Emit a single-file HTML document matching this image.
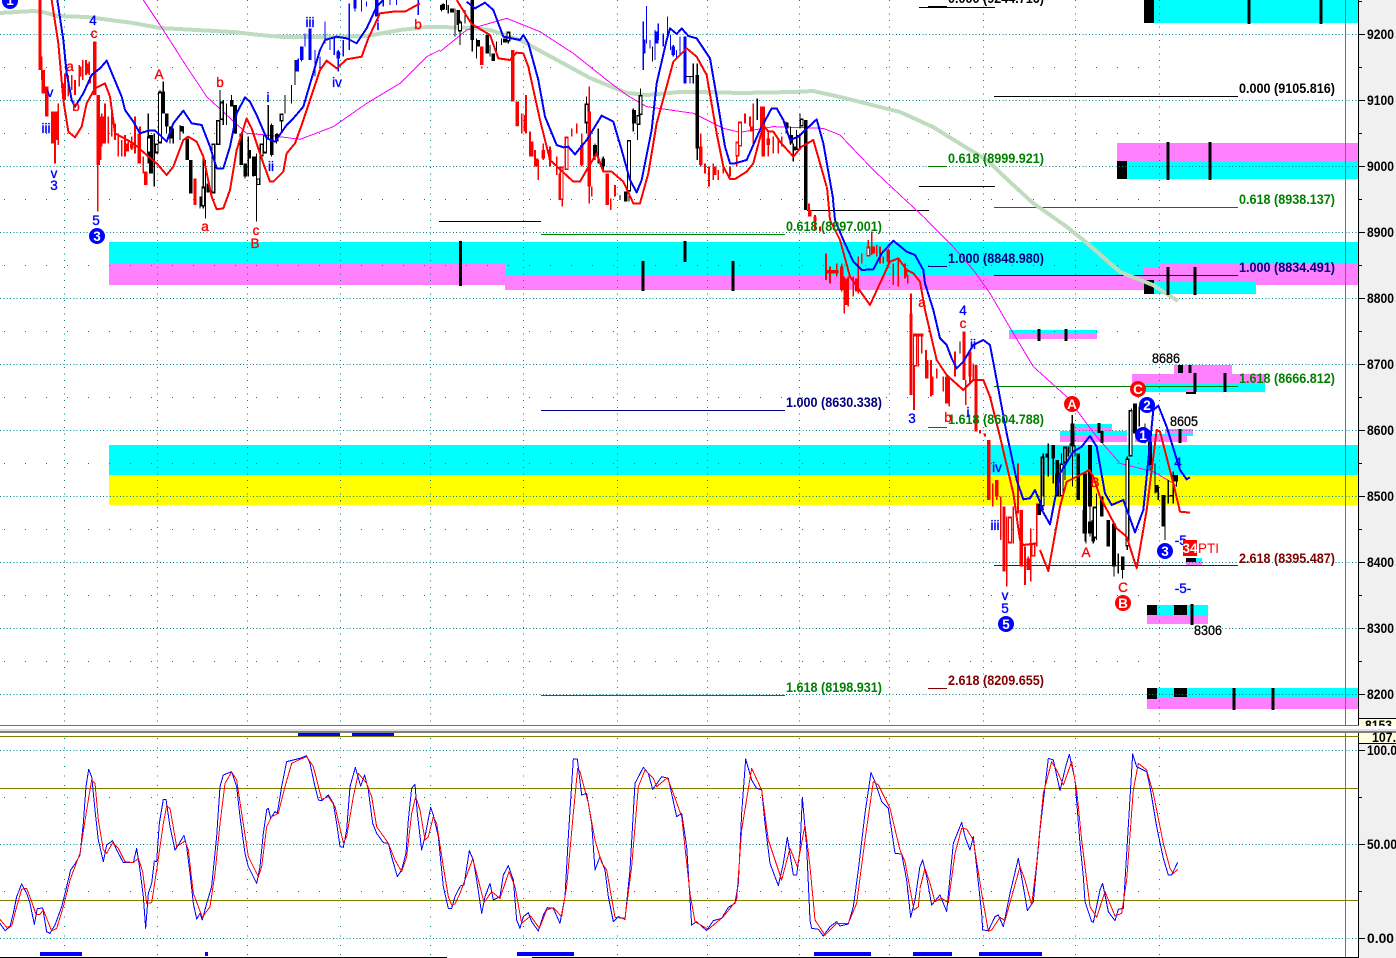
<!DOCTYPE html>
<html><head><meta charset="utf-8"><title>Chart</title>
<style>
html,body{margin:0;padding:0;background:#fff;overflow:hidden}
svg{display:block}
text{font-family:"Liberation Sans",sans-serif}
.f{font-size:13.5px;font-weight:bold}
.w{font-size:13.5px;text-anchor:middle}
</style></head><body>
<svg width="1396" height="958" viewBox="0 0 1396 958" xmlns="http://www.w3.org/2000/svg" shape-rendering="crispEdges">
<rect width="1396" height="958" fill="#fff"/>
<!-- bands -->
<g>
<rect x="1144" y="0" width="215" height="23" fill="#0ff"/><rect x="1144" y="0" width="10" height="23" fill="#000"/>
<rect x="1117" y="143" width="242" height="18" fill="#ff80ff"/><rect x="1127" y="161" width="232" height="18" fill="#0ff"/><rect x="1117" y="161" width="10" height="18" fill="#000"/>
<rect x="109" y="242" width="1250" height="21" fill="#0ff"/><rect x="505" y="263" width="855" height="13" fill="#0ff"/>
<rect x="109" y="263" width="396" height="22" fill="#ff80ff"/><rect x="505" y="276" width="639" height="14" fill="#ff80ff"/>
<rect x="1144" y="267" width="16" height="14" fill="#ff80ff"/><rect x="1160" y="263" width="199" height="22" fill="#ff80ff"/>
<rect x="1144" y="281" width="112" height="13" fill="#0ff"/><rect x="1144" y="280" width="10" height="14" fill="#000"/>
<rect x="109" y="445" width="1250" height="30" fill="#0ff"/><rect x="109" y="475" width="1250" height="30" fill="#ff0"/>
<rect x="1009" y="330" width="88" height="4" fill="#0ff"/><rect x="1009" y="334" width="88" height="5" fill="#ff80ff"/>
<rect x="1174" y="365" width="58" height="9" fill="#ff80ff"/><rect x="1132" y="374" width="133" height="9" fill="#ff80ff"/><rect x="1132" y="383" width="133" height="9" fill="#0ff"/>
<rect x="1186" y="392" width="10" height="2" fill="#000"/><rect x="1186" y="390" width="10" height="2" fill="#ff80ff"/>
<rect x="1178" y="365" width="5" height="8" fill="#000"/>
<rect x="1075" y="424" width="37" height="4" fill="#0ff"/><rect x="1075" y="428" width="37" height="3" fill="#ff80ff"/>
<rect x="1060" y="431" width="67" height="5" fill="#0ff"/><rect x="1060" y="436" width="67" height="6" fill="#ff80ff"/>
<rect x="1165" y="429" width="28" height="5" fill="#ff80ff"/><rect x="1135" y="434" width="58" height="2" fill="#0ff"/><rect x="1135" y="436" width="52" height="6" fill="#ff80ff"/>
<rect x="1186" y="558" width="10" height="4" fill="#000"/><rect x="1196" y="558" width="6" height="4" fill="#0ff"/><rect x="1186" y="562" width="16" height="3" fill="#ff80ff"/>
<rect x="1147" y="605" width="61" height="10" fill="#0ff"/><rect x="1147" y="605" width="10" height="10" fill="#000"/><rect x="1174" y="605" width="13" height="10" fill="#000"/><rect x="1147" y="615" width="61" height="9" fill="#ff80ff"/>
<rect x="1157" y="688" width="202" height="10" fill="#0ff"/><rect x="1147" y="698" width="212" height="11" fill="#ff80ff"/><rect x="1147" y="688" width="10" height="11" fill="#000"/><rect x="1174" y="688" width="13" height="9" fill="#000"/>
</g>
<!-- grid -->
<path fill="none" stroke="#008080" stroke-dasharray="1 2.33" d="M0 34.5H1359M0 100.5H1359M0 166.5H1359M0 232.5H1359M0 298.5H1359M0 364.5H1359M0 430.5H1359M0 496.5H1359M0 562.5H1359M0 628.5H1359M0 694.5H1359M0 750.5H1359M0 844.5H1359M0 938.5H1359"/>
<path fill="none" stroke="#008080" stroke-dasharray="1 20" d="M4 67.5H1150M4 133.5H1150M4 199.5H1150M4 265.5H1150M4 331.5H1150M4 397.5H1150M4 463.5H1150M4 529.5H1150M4 595.5H1150M4 661.5H1150M4 797.5H1150M4 891.5H1150"/>
<path fill="none" stroke="#008080" stroke-dasharray="1 5.67" d="M64.5 0V724M157.5 0V724M247.5 0V724M340.5 0V724M430.5 0V724M523.5 0V724M617.5 0V724M707.5 0V724M799.5 0V724M889.5 0V724M983.5 0V724M1075.5 0V724M1159.5 0V724"/>
<path fill="none" stroke="#008080" stroke-dasharray="1 8.4" d="M64.5 738V958M157.5 738V958M247.5 738V958M340.5 738V958M430.5 738V958M523.5 738V958M617.5 738V958M707.5 738V958M799.5 738V958M889.5 738V958M983.5 738V958M1075.5 738V958M1159.5 738V958"/>
<!-- fib lines -->
<g fill="none">
<path stroke="#000" d="M919 7.5H995M928 6.5H947M919 186.5H995M807 210.5H929M439 221.5H541M994 96.5H1238"/>
<path stroke="#008000" d="M928 166.5H947M541 234.5H785M994 207.5H1238M994 386.5H1238M928 427.5H947M541 695.5H785"/>
<path stroke="#000080" d="M928 266.5H947M994 275.5H1238M541 410.5H785"/>
<path stroke="#800000" d="M994 565.5H1238M928 688.5H947"/>
</g>
<!-- slow MA -->
<path fill="none" stroke="#c0dcc0" stroke-width="4" stroke-linejoin="round" d="M0 13L33 11L43 12L57 16L87 17L133 23L160 28L233 32L260 35L283 37L333 37L367 36L400 30L427 27L440 27L473 28L490 30L520 40L557 60L590 78L627 93L647 95L680 92L707 92L740 93L793 92L813 91L840 97L900 112L933 127L967 148L987 160L1010 182L1033 203L1067 227L1087 243L1120 272L1153 285L1178 301"/>
<!-- magenta -->
<g fill="none" stroke="#f0f" stroke-width="3" transform="scale(.33333)"><path d="M430 0L480 75L560 200L620 290L680 345L740 400L800 405L900 418L1000 380L1100 310L1200 250L1280 170L1320 150"/></g>
<g fill="none" stroke="#f0f" stroke-width="3" transform="translate(440,0) scale(.33333)"><path d="M0 155L80 90L200 55L300 95L400 160L500 240L560 285L620 320L760 340L850 385L900 397L1000 380L1150 385L1200 405L1300 510L1380 585"/></g>
<path fill="none" stroke="#f0f" d="M900 195L927 220"/>
<g fill="none" stroke="#f0f" stroke-width="3" transform="translate(800,220) scale(.33333)"><path d="M380 0L450 70L520 150L570 220L640 340L700 440L800 530"/></g>
<g fill="none" stroke="#f0f" stroke-width="3" transform="translate(1040,340) scale(.33333)"><path d="M80 170L170 290L240 370L280 380L340 395L400 430L410 440"/></g>
<!-- bars z1 -->
<g transform="scale(.33333)" fill="none">
<path stroke="#f00" stroke-width="5" d="M165 350V490M175 310V435M293 495V635M125 170V240M195 220V300M205 225V290M215 225V270M225 240V285M238 195V260M248 180V240M258 180V225M268 185V225M305 340V440M315 310V430M325 350V430M335 340V410M345 370V420M355 400V470M365 420V470M375 405V470M385 420V455M395 410V450M405 350V460M415 400V490M420 380V490M430 470V520M190 250V300M300 350V430M310 350V430M270 230V250"/>
<path stroke="#f00" stroke-width="10" d="M120 0V210M130 210V280M140 260V350M158 335V430M284 125V285M295 285V495M437 515V555M585 535V615M300 350V480M240 200V230M262 190V220M380 430V455M395 430V445M168 335V420M310 350V430"/>
<path stroke="#000" stroke-width="3.5" d="M445 340V490M463 400V560M480 270V430M490 245V340M500 340V400M510 380V430M520 385V430M540 375V420M550 380V400M560 410V480M610 470V625M617 480V655M600 590V625M650 360V435M660 270V360M670 300V375M680 310V375M695 285V320M705 315V400M720 400V495M735 490V535M745 410V530M750 450V475M760 470V530M770 460V665M780 430V540M795 405V460M805 315V420M815 370V470M830 400V430M845 340V400M855 285V340M875 255V310M885 180V255M1365 25V110M1330 10V30M1345 15V40"/>
<path stroke="#000" stroke-width="11" d="M453 405V520M490 275V340M500 340V380M513 380V415M545 378V395M562 415V480M572 480V580M605 590V620M625 550V577M705 315V400M724 400V495M736 490V530M748 450V475M762 470V528M815 375V465M830 402V425M1330 12V28M1355 25V38M1375 30V75M695 300V320"/>
<path stroke="#000" stroke-width="12" d="M640 430V580M655 360V435M665 305V360M775 535V555M785 430V470M795 405V460M845 340V365M480 275V430M470 430V460M447 410V460M610 560V620"/>
<path stroke="#fff" stroke-width="5" d="M640 435V575M655 365V430M665 310V355M775 538V552M785 435V465M795 410V455M845 345V360M480 280V425M470 435V455M447 415V455M610 565V615"/>
<path stroke="#00f" stroke-width="3.5" d="M945 150V230M960 170V210M975 65V130M990 120V150M1003 110V165M1015 150V215M1030 120V170M1048 10V150M1065 0V35M1085 0V35M1100 5V20M1255 0V45M905 140V185M915 100V140M895 175V215M1150 0V20M1170 0V15M1190 0V15"/>
<path stroke="#00f" stroke-width="10" d="M930 85V180M1130 0V50M1065 0V25M1015 155V175M890 180V215M905 140V180"/>
</g>
<!-- bars z2 -->
<g transform="translate(440,0) scale(.33333)" fill="none">
<path stroke="#000" stroke-width="3.5" d="M5 15V35M20 0V30M45 30V110M60 60V135M75 30V70M97 0V155M110 115V175M150 135V170M170 125V160M185 115V135M205 95V130M440 290V400M465 430V480M475 385V490M490 470V510M540 585V600M567 420V605M580 325V395M593 345V420M602 265V345M638 140V185M750 230V250M760 190V250M772 190V480M952 295V360M1038 365V400M1052 380V435M1060 430V485M1070 390V450M1080 340V385"/>
<path stroke="#000" stroke-width="11" d="M5 15V30M37 25V38M97 0V120M115 120V140M142 105V160M160 160V183M195 115V128M465 435V470M490 475V500M557 575V605M582 330V370M772 225V445M1040 368V385M1054 405V430M1063 440V452M1097 360V630"/>
<path stroke="#000" stroke-width="12" d="M60 65V95M205 95V125M440 310V370M567 420V575M595 345V375M602 285V345M1075 405V450M1085 355V380"/>
<path stroke="#fff" stroke-width="5" d="M60 70V90M205 100V120M440 315V365M567 425V570M595 350V370M602 290V340M1075 410V445M1085 360V375"/>
<path stroke="#f00" stroke-width="5" d="M125 200V205M232 305V380M245 340V400M258 285V400M270 395V470M285 450V500M295 480V540M310 430V480M330 440V500M350 470V525M367 500V620M380 410V510M395 385V410M410 370V400M425 400V500M448 260V610M455 560V590M512 595V630M525 555V590M782 400V500M795 490V520M807 500V560M820 490V540M835 510V540M850 495V520M870 500V530M890 425V500M900 365V440M915 340V370M930 350V380M940 310V440M962 320V390M985 390V470M1000 410V460M1015 420V460M1025 410V440M1107 610V650M1125 645V690M1140 680V695"/>
<path stroke="#f00" stroke-width="10" d="M125 140V195M218 150V305M232 305V378M255 345V395M275 425V470M290 475V500M360 520V600M425 435V495M448 335V560M502 520V615M970 320V470M782 440V495M825 500V525M935 380V395M985 415V435M1110 630V650M1125 650V665M310 450V475M330 450V480"/>
<path stroke="#f00" stroke-width="12" d="M365 500V600M380 410V510M892 425V470M900 365V440"/>
<path stroke="#fff" stroke-width="5" d="M365 505V595M380 415V505M892 430V465M900 370V435"/>
<path stroke="#00f" stroke-width="3.5" d="M610 65V210M620 18V130M630 120V145M645 90V180M655 70V120M670 100V140M683 50V110M692 105V150M700 135V170M710 150V175M720 110V165M750 230V250"/>
<path stroke="#00f" stroke-width="10" d="M735 110V250M700 140V165M612 118V160M650 95V130"/>
<path stroke="#000" stroke-width="3" d="M735 230H760"/>
</g>
<!-- bars z3 -->
<g transform="translate(800,220) scale(.33333)" fill="none">
<path stroke="#f00" stroke-width="5" d="M78 100V180M90 140V190M110 130V170M125 130V215M133 170V280M145 170V260M160 170V230M175 110V220M185 100V130M205 60V110M215 35V105M230 75V110M240 80V130M250 110V130M265 85V130M280 130V195M295 120V200M315 130V175M323 165V190M342 340V570M355 340V440M365 345V400M378 390V475M393 420V530M410 445V475M430 470V515M448 470V560M465 395V470M497 480V555M510 395V490M520 430V480M540 630V640M555 640V650M578 790V860M590 780V840M602 830V960M620 890V1100M640 860V970M654 730V880M675 980V1095M685 1010V1050M692 925V1085M700 970V1010M710 850V980M333 220V525"/>
<path stroke="#f00" stroke-width="10" d="M125 140V210M140 175V255M170 175V215M220 80V100M265 90V125M318 145V170M333 280V525M380 420V475M395 470V525M440 470V550M492 335V480M510 395V470M528 435V635M566 660V840M590 780V830M612 860V1055M664 870V1040M685 1015V1050M75 155H115M345 345H370"/>
<path stroke="#f00" stroke-width="12" d="M345 345V440M630 890V970M700 970V1010M205 80V110"/>
<path stroke="#fff" stroke-width="5" d="M345 350V435M630 895V965M700 975V1005M205 85V105"/>
<path stroke="#000" stroke-width="3.5" d="M480 365V400M728 710V860M745 670V770M785 700V790M795 680V730M805 680V710M818 590V800M858 870V970M882 900V965M890 860V950M870 675V950"/>
<path stroke="#000" stroke-width="11" d="M718 850V885M760 675V715M772 720V830M835 700V840M818 610V680M853 870V940M870 905V940M880 900V955"/>
<path stroke="#000" stroke-width="12" d="M728 710V860M795 680V730"/>
<path stroke="#fff" stroke-width="5" d="M728 715V855M795 685V725"/>
</g>
<!-- bars z4 -->
<g transform="translate(1040,340) scale(.33333)" fill="none">
<path stroke="#000" stroke-width="3.5" d="M10 340V470M25 340V365M40 315V430M60 370V470M75 320V420M90 310V340M97 225V320M105 315V350M135 400V605M160 500V610M170 460V600M222 550V710M235 640V700M248 650V715M262 350V630M275 205V350M298 200V260M315 250V310M330 305V390M345 370V460M355 440V480M375 465V600M385 420V490M400 395V490M410 405V440"/>
<path stroke="#000" stroke-width="11" d="M22 340V352M50 400V470M97 250V315M115 340V480M135 400V580M150 315V500M160 570V605M185 470V530M205 540V620M222 550V680M248 650V690M285 190V280M330 305V375M350 435V458M370 465V560M408 405V425"/>
<path stroke="#000" stroke-width="12" d="M262 355V620M272 210V350M65 370V470M165 500V595M395 465V470"/>
<path stroke="#fff" stroke-width="5" d="M262 360V615M272 215V345M65 375V465M165 505V590"/>
</g>
<!-- blue MA -->
<g fill="none" stroke="#00f" stroke-width="6" stroke-linejoin="round">
<path transform="scale(.33333)" d="M172 0L190 120L200 220L215 300L225 320L250 280L275 225L300 205L320 182L340 230L365 290L375 330L400 365L420 400L445 392L465 392L480 405L500 425L520 370L550 332L575 370L605 375L630 440L650 505L670 505L690 440L710 340L735 292L750 305L770 345L800 415L825 425L860 375L880 355L910 320L935 235L960 150L975 120L1010 110L1040 115L1070 130L1100 85L1130 20L1150 0"/>
<path transform="translate(440,0) scale(.33333)" d="M80 5L105 25L135 8L160 30L190 110L240 120L250 105L265 130L295 240L315 350L350 435L370 442L385 440L405 463L440 420L485 347L520 365L545 450L570 540L590 577L605 540L635 390L650 250L680 120L690 85L710 102L725 85L745 108L770 115L810 175L830 290L855 440L870 490L885 490L920 480L960 390L995 325L1010 325L1030 360L1050 420L1075 410L1130 358L1150 430L1180 600"/>
<path d="M833 200L835 220" stroke-width="2"/>
<path transform="translate(800,220) scale(.33333)" d="M105 0L130 60L160 125L185 150L220 148L245 100L280 62L320 95L345 105L370 150L375 190L400 270L420 355L440 375L455 415L470 445L490 425L520 375L550 360L570 375L590 480L620 640L650 780L670 838L690 835L705 810L730 870"/>
<path transform="translate(1040,340) scale(.33333)" d="M0 500L30 553L60 400L100 335L125 320L150 288L170 320L195 460L215 495L250 480L285 577L310 510L340 210L355 197L380 260L420 390L440 418L450 412"/>
</g>
<!-- red MA -->
<g fill="none" stroke="#f00" stroke-width="6" stroke-linejoin="round">
<path transform="scale(.33333)" d="M155 0L175 130L190 300L205 395L225 412L245 380L260 310L285 265L315 250L330 290L345 400L400 430L440 465L470 490L500 525L520 500L550 420L565 410L590 425L610 470L635 590L650 628L670 625L690 570L710 450L740 355L755 385L790 490L810 545L820 545L850 515L860 460L885 430L905 375L960 210L980 182L1010 205L1040 178L1085 170L1105 115L1140 40L1180 35L1215 35L1260 10"/>
<path transform="translate(440,0) scale(.33333)" d="M50 0L95 72L150 105L175 175L210 180L230 158L250 160L265 200L300 360L330 480L400 545L420 545L440 510L470 460L490 515L515 515L550 545L580 610L600 610L625 520L650 370L700 185L740 145L770 170L800 225L830 400L850 500L870 537L885 537L920 515L940 490L970 375L985 395L1000 395L1020 425L1060 470L1085 440L1120 420L1160 560"/>
<path d="M827 187L830 220" stroke-width="2"/>
<path transform="translate(800,220) scale(.33333)" d="M90 0L120 60L150 170L210 255L240 190L270 125L295 115L320 150L340 160L360 185L375 270L410 420L440 465L490 510L520 480L550 480L570 530L600 650L640 820L660 960L670 975L710 970"/>
<path transform="translate(1040,340) scale(.33333)" d="M0 630L25 693L60 500L80 425L120 405L148 390L160 410L180 470L230 565L260 590L290 685L320 510L350 270L360 275L400 430L420 515L450 518"/>
</g>
<!-- ticks on bands -->
<path fill="none" stroke="#000" stroke-width="3" d="M1249 0V24M1321 0V24M1168 142V180M1210 142V180M460.500 241V286M643 261V291M685 241V262M733 261V291M1168 267V295M1195 267V295M1039 329V341M1066 329V341M1195 373V392M1225 373V392M1190 365V373M1099 423V433M1102 431V443M1180 429V443M1192 604V625M1234 688V710M1273 688V710"/>
<!-- text labels -->
<text x="948" y="3" class="f" textLength="96" lengthAdjust="spacingAndGlyphs" fill="#000">0.000 (9244.716)</text>
<text x="1239" y="93" class="f" textLength="96" lengthAdjust="spacingAndGlyphs" fill="#000">0.000 (9105.816)</text>
<text x="948" y="163" class="f" textLength="96" lengthAdjust="spacingAndGlyphs" fill="#008000">0.618 (8999.921)</text>
<text x="1239" y="204" class="f" textLength="96" lengthAdjust="spacingAndGlyphs" fill="#008000">0.618 (8938.137)</text>
<text x="786" y="231" class="f" textLength="96" lengthAdjust="spacingAndGlyphs" fill="#008000">0.618 (8897.001)</text>
<text x="948" y="263" class="f" textLength="96" lengthAdjust="spacingAndGlyphs" fill="#000080">1.000 (8848.980)</text>
<text x="1239" y="272" class="f" textLength="96" lengthAdjust="spacingAndGlyphs" fill="#000080">1.000 (8834.491)</text>
<text x="1239" y="383" class="f" textLength="96" lengthAdjust="spacingAndGlyphs" fill="#008000">1.618 (8666.812)</text>
<text x="786" y="407" class="f" textLength="96" lengthAdjust="spacingAndGlyphs" fill="#000080">1.000 (8630.338)</text>
<text x="948" y="424" class="f" textLength="96" lengthAdjust="spacingAndGlyphs" fill="#008000">1.618 (8604.788)</text>
<text x="1239" y="563" class="f" textLength="96" lengthAdjust="spacingAndGlyphs" fill="#800000">2.618 (8395.487)</text>
<text x="948" y="685" class="f" textLength="96" lengthAdjust="spacingAndGlyphs" fill="#800000">2.618 (8209.655)</text>
<text x="786" y="692" class="f" textLength="96" lengthAdjust="spacingAndGlyphs" fill="#008000">1.618 (8198.931)</text>
<g font-size="13.5" fill="#000" stroke="#000" stroke-width=".3">
<text x="1152" y="363" textLength="28" lengthAdjust="spacingAndGlyphs">8686</text>
<text x="1170" y="426" textLength="28" lengthAdjust="spacingAndGlyphs">8605</text>
<text x="1194" y="635" textLength="28" lengthAdjust="spacingAndGlyphs">8306</text>
</g>
<g fill="#00f" stroke="#00f" stroke-width=".35">
<text class="w" x="93" y="25">4</text><text class="w" x="50" y="97">v</text><text class="w" x="46" y="133">iii</text><text class="w" x="54" y="178">v</text><text class="w" x="54" y="190">3</text><text class="w" x="96" y="225">5</text><text class="w" x="268" y="102">i</text><text class="w" x="310" y="27">iii</text><text class="w" x="337" y="87">iv</text><text class="w" x="271" y="171">ii</text><text class="w" x="378" y="30">i</text>
<text class="w" x="963" y="315">4</text><text class="w" x="973" y="349">ii</text><text class="w" x="968" y="417">i</text><text class="w" x="912" y="423">3</text><text class="w" x="997" y="472">iv</text><text class="w" x="995" y="530">iii</text><text class="w" x="1005" y="600">v</text><text class="w" x="1005" y="613">5</text>
<text class="w" x="1178" y="467">4</text><text class="w" x="1183" y="545">-5-</text><text class="w" x="1183" y="593">-5-</text>
</g>
<g fill="#f00" stroke="#f00" stroke-width=".35">
<text class="w" x="94" y="38">c</text><text class="w" x="70" y="71">a</text><text class="w" x="76" y="111">b</text><text class="w" x="159" y="79">A</text><text class="w" x="220" y="87">b</text><text class="w" x="205" y="231">a</text><text class="w" x="256" y="235">c</text><text class="w" x="255" y="248">B</text><text class="w" x="418" y="29">b</text>
<text class="w" x="963" y="328">c</text><text class="w" x="948" y="422">b</text><text class="w" x="922" y="307">a</text><text class="w" x="1086" y="557">A</text><text class="w" x="1095" y="487">B</text><text class="w" x="1123" y="592">C</text>
</g>
<!-- circles -->
<g shape-rendering="auto">
<g fill="#00f"><circle cx="10" cy="1" r="8"/><circle cx="97" cy="236" r="8"/><circle cx="1006" cy="624" r="8"/><circle cx="1147" cy="405" r="8"/><circle cx="1143" cy="435" r="8"/><circle cx="1165" cy="551" r="8"/></g>
<g fill="#f00"><circle cx="1072" cy="404" r="8"/><circle cx="1138" cy="389" r="8"/><circle cx="1123" cy="603" r="8"/></g>
</g>
<g fill="#fff" font-weight="bold">
<text class="w" x="10" y="5">1</text><text class="w" x="97" y="241">3</text><text class="w" x="1006" y="629">5</text><text class="w" x="1147" y="410">2</text><text class="w" x="1143" y="440">1</text><text class="w" x="1165" y="556">3</text>
<text class="w" x="1072" y="409">A</text><text class="w" x="1138" y="394">C</text><text class="w" x="1123" y="608">B</text>
</g>
<rect x="1183" y="540" width="14" height="16" fill="#f00"/>
<text class="w" x="1190" y="553" fill="#fff" font-weight="bold">34</text>
<text x="1198" y="553" font-size="13.5" fill="#f00" textLength="21" lengthAdjust="spacingAndGlyphs">PTI</text>
<!-- lower panel -->
<path fill="none" stroke="#808000" d="M0 788.500H1359M0 900.500H1359M1345.500 0V958"/>
<g fill="#00f"><rect x="298" y="733" width="42" height="3"/><rect x="352" y="733" width="42" height="3"/>
<rect x="40" y="952" width="42" height="4"/><rect x="205" y="952" width="3" height="4"/><rect x="517" y="952" width="57" height="4"/><rect x="814" y="952" width="57" height="4"/><rect x="913" y="952" width="39" height="4"/><rect x="979" y="952" width="63" height="4"/></g>
<path fill="none" stroke="#000" d="M0 957.500H447M532 957.500H1359"/>
<g transform="translate(0,680) scale(.33333)" fill="none" stroke-width="3" stroke-linejoin="round">
<path stroke="#00f" d="M0 730L15 752L30 740L40 700L50 650L65 612L80 640L90 670L103 733L112 686L128 684L140 755L150 760L165 735L185 680L200 620L212 570L225 552L240 525L250 430L258 320L266 268L275 290L285 390L295 480L310 545L320 495L338 482L350 510L370 548L400 548L410 505L420 570L430 650L437 745L445 640L455 610L463 543L470 545L478 430L490 358L498 358L510 440L525 510L535 495L552 466L560 500L570 580L580 670L590 717L600 700L607 720L620 670L635 620L650 470L660 320L670 285L695 275L710 320L720 410L735 520L745 560L760 590L770 610L780 560L790 460L800 390L805 385L812 415L825 395L832 400L845 320L860 245L880 240L900 235L920 227L930 250L945 320L955 360L965 362L985 345L1000 370L1010 430L1020 500L1030 502L1040 450L1050 320L1066 262L1082 318L1094 285L1105 330L1118 430L1130 460L1150 488L1165 490L1175 530L1192 590L1205 570L1218 520L1225 420L1235 325L1245 313L1252 400L1265 510L1275 470L1292 382L1300 405L1315 470L1330 620L1345 685L1355 685L1365 650L1380 620"/>
<path stroke="#f00" d="M0 718L20 742L35 738L50 680L65 628L80 625L95 665L108 703L120 703L130 690L155 753L170 745L190 680L210 600L240 520L260 390L275 300L285 310L295 420L310 510L320 520L338 488L355 505L375 545L400 548L415 535L428 575L440 670L455 668L470 570L490 430L500 378L510 385L530 500L555 483L565 510L580 640L607 712L630 680L645 580L660 430L675 310L695 276L710 300L725 400L745 530L775 590L785 560L800 440L815 410L835 400L855 320L875 250L900 238L920 230L940 260L965 358L985 350L1005 380L1030 488L1040 470L1060 350L1075 280L1100 310L1115 350L1130 440L1165 490L1185 540L1205 575L1220 530L1235 400L1247 350L1260 390L1275 480L1285 470L1300 410L1310 430L1330 560L1345 650L1355 675L1365 672L1380 640"/>
</g>
<g transform="translate(460,680) scale(.33333)" fill="none" stroke-width="3" stroke-linejoin="round">
<path stroke="#00f" d="M0 618L12 615L28 512L40 540L50 600L65 700L75 650L90 610L100 660L120 650L130 585L145 557L160 600L170 720L180 745L190 710L205 698L215 725L235 753L250 705L262 683L280 685L300 730L315 650L325 470L340 237L352 237L365 345L380 340L395 430L405 570L420 530L435 570L445 650L460 725L475 710L495 718L510 570L525 310L550 262L565 280L578 328L590 312L605 290L625 295L650 410L665 400L680 500L695 735L710 725L740 752L760 722L785 715L805 682L825 670L835 610L845 400L857 237L875 300L890 325L905 330L915 430L930 550L955 617L970 550L982 472L1000 585L1010 585L1020 510L1027 352L1040 500L1050 720L1055 745L1075 748L1090 768L1110 740L1130 725L1140 738L1165 732L1180 680L1195 570L1215 400L1233 278L1245 305L1265 365L1285 385L1305 520L1325 522L1340 600L1352 712L1365 660L1380 558"/>
<path stroke="#f00" d="M0 640L15 600L38 537L50 580L72 668L95 635L120 655L147 575L165 620L185 730L212 708L238 745L260 690L280 683L305 710L320 620L340 400L353 265L360 275L385 370L405 480L425 548L440 570L465 712L495 715L515 560L535 320L555 270L580 295L590 320L622 293L640 340L665 410L690 640L705 725L745 748L790 710L830 660L845 450L875 265L905 330L925 480L965 600L990 505L1012 560L1035 435L1050 560L1065 720L1095 766L1130 730L1165 730L1190 670L1215 480L1240 305L1255 315L1290 385L1320 510L1335 545L1362 690L1375 680L1380 630"/>
</g>
<g transform="translate(920,680) scale(.33333)" fill="none" stroke-width="3" stroke-linejoin="round">
<path stroke="#00f" d="M0 560L8 540L20 590L35 675L60 645L80 695L100 490L125 427L135 470L150 510L160 470L185 700L188 750L205 752L225 710L235 705L250 740L270 640L295 535L310 620L322 692L340 665L360 450L385 235L400 240L420 332L437 260L448 223L465 300L480 490L490 590L495 665L515 725L520 727L540 630L548 610L565 695L585 722L595 688L610 685L620 520L638 222L650 260L680 275L690 320L710 440L730 535L745 585L755 585L773 547"/>
<path stroke="#f00" d="M0 625L15 565L30 610L45 665L65 655L85 668L105 520L125 445L140 447L160 480L185 640L205 754L215 750L240 712L255 722L275 650L300 560L315 600L335 675L350 550L370 340L395 245L410 270L430 315L455 245L470 330L485 480L510 680L530 712L555 635L585 708L605 700L620 600L640 330L655 250L680 270L700 340L730 490L750 565L760 580L773 568"/>
</g>
<!-- axis -->
<rect x="1359" y="0" width="37" height="958" fill="#f0f0f0"/>
<path fill="none" stroke="#000" d="M1358.500 0V958"/>
<path fill="none" stroke="#000" d="M1359 34.500H1365M1359 100.500H1365M1359 166.500H1365M1359 232.500H1365M1359 298.500H1365M1359 364.500H1365M1359 430.500H1365M1359 496.500H1365M1359 562.500H1365M1359 628.500H1365M1359 694.500H1365M1359 1.500H1362M1359 67.500H1362M1359 133.500H1362M1359 199.500H1362M1359 265.500H1362M1359 331.500H1362M1359 397.500H1362M1359 463.500H1362M1359 529.500H1362M1359 595.500H1362M1359 661.500H1362M1359 750.500H1365M1359 844.500H1365M1359 938.500H1365M1359 797.500H1362M1359 891.500H1362"/>
<g font-size="13.5" font-weight="bold" fill="#000">
<text x="1367" y="39" textLength="27" lengthAdjust="spacingAndGlyphs">9200</text>
<text x="1367" y="105" textLength="27" lengthAdjust="spacingAndGlyphs">9100</text>
<text x="1367" y="171" textLength="27" lengthAdjust="spacingAndGlyphs">9000</text>
<text x="1367" y="237" textLength="27" lengthAdjust="spacingAndGlyphs">8900</text>
<text x="1367" y="303" textLength="27" lengthAdjust="spacingAndGlyphs">8800</text>
<text x="1367" y="369" textLength="27" lengthAdjust="spacingAndGlyphs">8700</text>
<text x="1367" y="435" textLength="27" lengthAdjust="spacingAndGlyphs">8600</text>
<text x="1367" y="501" textLength="27" lengthAdjust="spacingAndGlyphs">8500</text>
<text x="1367" y="567" textLength="27" lengthAdjust="spacingAndGlyphs">8400</text>
<text x="1367" y="633" textLength="27" lengthAdjust="spacingAndGlyphs">8300</text>
<text x="1367" y="699" textLength="27" lengthAdjust="spacingAndGlyphs">8200</text>
<text x="1367" y="755" textLength="30" lengthAdjust="spacingAndGlyphs">100.0</text>
<text x="1367" y="849" textLength="30" lengthAdjust="spacingAndGlyphs">50.00</text>
<text x="1367" y="943" textLength="27" lengthAdjust="spacingAndGlyphs">0.00</text>
</g>
<rect x="1359" y="718" width="37" height="12" fill="#ffffe0"/><path fill="none" stroke="#000" d="M1359 718.500H1396"/>
<text x="1365" y="730" font-size="13.5" font-weight="bold" fill="#000" textLength="27" lengthAdjust="spacingAndGlyphs">8153</text>
<!-- separator -->
<rect x="0" y="726" width="1396" height="3" fill="#fff"/>
<rect x="0" y="729" width="1396" height="2" fill="#e0e0e0"/><rect x="0" y="731" width="1396" height="2" fill="#808080"/>
<path fill="none" stroke="#808000" d="M0 725.500H1359M0 736.500H1359"/>
<rect x="1359" y="733" width="37" height="10" fill="#ffffe0"/><path fill="none" stroke="#000" d="M1359 743.500H1396"/>
<text x="1372" y="742" font-size="13.5" font-weight="bold" fill="#000" textLength="24" lengthAdjust="spacingAndGlyphs">107.</text>
</svg>
</body></html>
